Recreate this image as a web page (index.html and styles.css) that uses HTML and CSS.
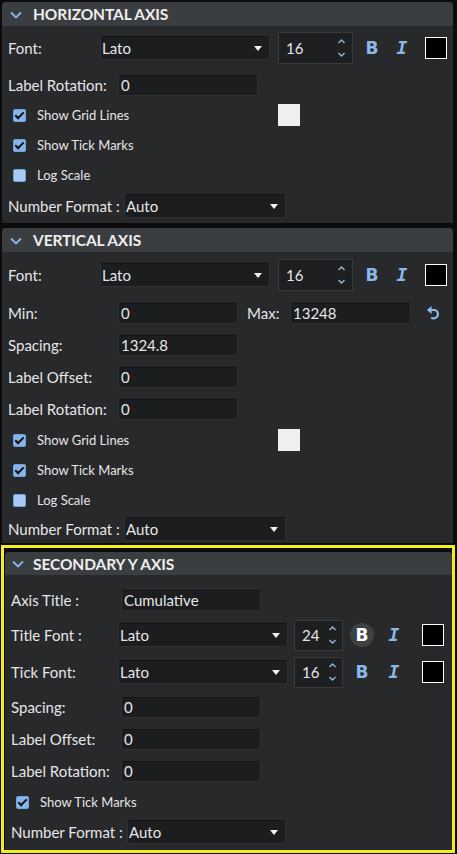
FILE: index.html
```html
<!DOCTYPE html>
<html lang="en">
<head>
    <meta charset="UTF-8">
    <meta name="viewport" content="width=device-width, initial-scale=1.0">
    <title>Axis Settings</title>
    <link rel="stylesheet" href="styles.css">
</head>
<body>
    <!-- Horizontal axis -->
    <div class="panel panel-h">
        <div class="panel-head">
            <svg class="chev" width="12" height="8" viewBox="0 0 12 8"><path d="M1 1.5 L6 6.5 L11 1.5" fill="none" stroke="#8bb8ea" stroke-width="1.8"/></svg>
            <span>HORIZONTAL AXIS</span>
        </div>
        <div class="panel-body">
            <div class="row row-font">
                <span class="lbl w92">Font:</span>
                <div class="select w170"><span>Lato</span><i class="caret"></i></div>
                <div class="spin">
                    <span>16</span>
                    <svg class="spin-arrows" width="9" height="22" viewBox="0 0 9 22"><path d="M1.5 6 L4.5 3 L7.5 6" fill="none" stroke="#9ab6d6" stroke-width="1.4"/><path d="M1.5 16 L4.5 19 L7.5 16" fill="none" stroke="#9ab6d6" stroke-width="1.4"/></svg>
                </div>
                <span class="tool tool-b">B</span>
                <span class="tool tool-i">I</span>
                <span class="swatch"></span>
            </div>
            <div class="row h30">
                <span class="lbl w110">Label Rotation:</span>
                <div class="input w140">0</div>
            </div>
            <div class="row h30">
                <span class="check on"></span>
                <span class="check-text w241">Show Grid Lines</span>
                <span class="swatch-light"></span>
            </div>
            <div class="row h30">
                <span class="check on"></span>
                <span class="check-text">Show Tick Marks</span>
            </div>
            <div class="row h30">
                <span class="check"></span>
                <span class="check-text">Log Scale</span>
            </div>
            <div class="row h32">
                <span class="lbl w116">Number Format :</span>
                <div class="select w162"><span>Auto</span><i class="caret"></i></div>
            </div>
        </div>
    </div>

    <!-- Vertical axis -->
    <div class="panel panel-v">
        <div class="panel-head">
            <svg class="chev" width="12" height="8" viewBox="0 0 12 8"><path d="M1 1.5 L6 6.5 L11 1.5" fill="none" stroke="#8bb8ea" stroke-width="1.8"/></svg>
            <span>VERTICAL AXIS</span>
        </div>
        <div class="panel-body">
            <div class="row row-font">
                <span class="lbl w92">Font:</span>
                <div class="select w170"><span>Lato</span><i class="caret"></i></div>
                <div class="spin">
                    <span>16</span>
                    <svg class="spin-arrows" width="9" height="22" viewBox="0 0 9 22"><path d="M1.5 6 L4.5 3 L7.5 6" fill="none" stroke="#9ab6d6" stroke-width="1.4"/><path d="M1.5 16 L4.5 19 L7.5 16" fill="none" stroke="#9ab6d6" stroke-width="1.4"/></svg>
                </div>
                <span class="tool tool-b">B</span>
                <span class="tool tool-i">I</span>
                <span class="swatch"></span>
            </div>
            <div class="row h32">
                <span class="lbl w110">Min:</span>
                <div class="input w120">0</div>
                <span class="lbl lbl-max">Max:</span>
                <div class="input w121">13248</div>
                <svg class="reset" width="16" height="16" viewBox="0 0 16 16"><path d="M4.5 5 H9 A4.3 4.3 0 1 1 5.2 12.6" fill="none" stroke="#8bb8ea" stroke-width="2.2"/><path d="M0.8 5 L5.6 1 L5.6 9 Z" fill="#8bb8ea"/></svg>
            </div>
            <div class="row h32">
                <span class="lbl w110">Spacing:</span>
                <div class="input w120">1324.8</div>
            </div>
            <div class="row h32">
                <span class="lbl w110">Label Offset:</span>
                <div class="input w120">0</div>
            </div>
            <div class="row h32">
                <span class="lbl w110">Label Rotation:</span>
                <div class="input w120">0</div>
            </div>
            <div class="row h30">
                <span class="check on"></span>
                <span class="check-text w241">Show Grid Lines</span>
                <span class="swatch-light"></span>
            </div>
            <div class="row h30">
                <span class="check on"></span>
                <span class="check-text">Show Tick Marks</span>
            </div>
            <div class="row h30">
                <span class="check"></span>
                <span class="check-text">Log Scale</span>
            </div>
            <div class="row h28">
                <span class="lbl w116">Number Format :</span>
                <div class="select w162"><span>Auto</span><i class="caret"></i></div>
            </div>
        </div>
    </div>

    <!-- Secondary Y axis (selected) -->
    <div class="selected">
        <div class="panel panel-y">
            <div class="panel-head">
                <svg class="chev" width="12" height="8" viewBox="0 0 12 8"><path d="M1 1.5 L6 6.5 L11 1.5" fill="none" stroke="#8bb8ea" stroke-width="1.8"/></svg>
                <span>SECONDARY Y AXIS</span>
            </div>
            <div class="panel-body">
                <div class="row h34">
                    <span class="lbl w110">Axis Title :</span>
                    <div class="input w140">Cumulative</div>
                </div>
                <div class="row h36">
                    <span class="lbl w107">Title Font :</span>
                    <div class="select w170"><span>Lato</span><i class="caret"></i></div>
                    <div class="spin spin-sm">
                        <span>24</span>
                        <svg class="spin-arrows" width="9" height="22" viewBox="0 0 9 22"><path d="M1.5 6 L4.5 3 L7.5 6" fill="none" stroke="#9ab6d6" stroke-width="1.4"/><path d="M1.5 16 L4.5 19 L7.5 16" fill="none" stroke="#9ab6d6" stroke-width="1.4"/></svg>
                    </div>
                    <span class="tool tool-b tool-sm active"><b>B</b></span>
                    <span class="tool tool-i tool-sm">I</span>
                    <span class="swatch swatch-sm"></span>
                </div>
                <div class="row h38">
                    <span class="lbl w107">Tick Font:</span>
                    <div class="select w170"><span>Lato</span><i class="caret"></i></div>
                    <div class="spin spin-sm">
                        <span>16</span>
                        <svg class="spin-arrows" width="9" height="22" viewBox="0 0 9 22"><path d="M1.5 6 L4.5 3 L7.5 6" fill="none" stroke="#9ab6d6" stroke-width="1.4"/><path d="M1.5 16 L4.5 19 L7.5 16" fill="none" stroke="#9ab6d6" stroke-width="1.4"/></svg>
                    </div>
                    <span class="tool tool-b tool-sm">B</span>
                    <span class="tool tool-i tool-sm">I</span>
                    <span class="swatch swatch-sm"></span>
                </div>
                <div class="row h32">
                    <span class="lbl w110">Spacing:</span>
                    <div class="input w140">0</div>
                </div>
                <div class="row h32">
                    <span class="lbl w110">Label Offset:</span>
                    <div class="input w140">0</div>
                </div>
                <div class="row h32">
                    <span class="lbl w110">Label Rotation:</span>
                    <div class="input w140">0</div>
                </div>
                <div class="row h30">
                    <span class="check on"></span>
                    <span class="check-text">Show Tick Marks</span>
                </div>
                <div class="row h30">
                    <span class="lbl w116">Number Format :</span>
                    <div class="select w159"><span>Auto</span><i class="caret"></i></div>
                </div>
            </div>
        </div>
    </div>
</body>
</html>
```

FILE: styles.css
```css
body {
    margin: 0;
    width: 457px;
    height: 854px;
    overflow: hidden;
    background-color: #0c0c0c;
    font-family: Lato, "Open Sans", sans-serif;
    font-size: 15px;
    color: #e6e6e6;
}
.panel {
    background-color: #27292b;
    border-radius: 4px 4px 0 0;
}
.panel-h {
    margin: 2px 4px 0 2px;
    height: 221px;
}
.panel-v {
    margin: 5px 4px 0 2px;
    height: 315px;
}
.panel-head {
    height: 24px;
    display: flex;
    align-items: center;
    background-color: #3a3e40;
    border-radius: 4px 4px 0 0;
    font-weight: bold;
    font-size: 15.5px;
    color: #eeeeee;
    letter-spacing: -0.1px;
}
.chev {
    margin: 1px 11px 0 8px;
}
.panel-body {
    padding: 0 0 0 6px;
}
.panel-v .panel-body {
    padding-top: 1px;
}
.row {
    display: flex;
    align-items: center;
}
.row-font { height: 44px; }
.h28 { height: 28px; }
.h30 { height: 30px; }
.h32 { height: 32px; }
.h34 { height: 34px; }
.h36 { height: 36px; }
.h38 { height: 38px; }

.lbl {
    flex-shrink: 0;
    white-space: nowrap;
}
.w92 { width: 92px; }
.w107 { width: 107px; }
.w110 { width: 110px; }
.w116 { width: 116px; }
.lbl-max {
    width: 43px;
    margin-left: 9px;
}

.input, .select {
    box-sizing: border-box;
    background-color: #1c1d1f;
    border: 1px solid #2e3032;
    border-top-color: #141516;
    border-radius: 3px;
    white-space: nowrap;
}
.input {
    height: 21px;
    line-height: 19px;
    padding-left: 2px;
}
.select {
    height: 24px;
    display: flex;
    align-items: center;
    justify-content: space-between;
    padding: 0 7px 0 1px;
}
.w120 { width: 120px; }
.w121 { width: 121px; }
.w140 { width: 140px; }
.w159 { width: 159px; }
.w162 { width: 162px; }
.w170 { width: 170px; }
.caret {
    width: 0;
    height: 0;
    border-left: 4.5px solid transparent;
    border-right: 4.5px solid transparent;
    border-top: 5px solid #f0f0f0;
}

.spin {
    box-sizing: border-box;
    width: 75px;
    height: 32px;
    margin-left: 8px;
    display: flex;
    align-items: center;
    justify-content: space-between;
    padding: 0 6px 0 7px;
    background-color: #1e1f21;
    border: 1px solid #38393b;
}
.spin-sm {
    width: 49px;
    height: 31px;
    margin-left: 6px;
    padding: 0 5px 0 7px;
}

.tool {
    width: 30px;
    text-align: center;
    color: #8bb8ea;
    line-height: 24px;
}
.tool-b {
    margin-left: 4px;
    font-family: "DejaVu Sans", sans-serif;
    font-weight: bold;
    font-size: 17px;
}
.tool-i {
    font-family: "DejaVu Sans Mono", monospace;
    font-weight: bold;
    font-style: italic;
    font-size: 18px;
}
.tool-sm {
    width: 32px;
}
.tool-b.tool-sm {
    margin-left: 3px;
}
.tool.active b {
    display: inline-block;
    width: 24px;
    height: 24px;
    border-radius: 50%;
    background-color: #3e4042;
    color: #ffffff;
}
.swatch {
    box-sizing: border-box;
    width: 22px;
    height: 22px;
    margin-left: 8px;
    background-color: #000000;
    border: 1px solid #ffffff;
}
.swatch-sm {
    margin-left: 12px;
}
.swatch-light {
    width: 22px;
    height: 22px;
    background-color: #f0f0f0;
}

.check {
    box-sizing: border-box;
    width: 13px;
    height: 13px;
    margin-left: 5px;
    border-radius: 2px;
    border: 1px solid #6fa3e0;
    background-color: #a9c9f2;
    position: relative;
}
.check.on {
    background-color: #86b5ec;
}
.check.on::after {
    content: "";
    position: absolute;
    left: 3px;
    top: 0px;
    width: 3px;
    height: 7px;
    border: solid #111111;
    border-width: 0 2px 2px 0;
    transform: rotate(45deg);
}
.check-text {
    margin-left: 11px;
    font-size: 13px;
}
.w241 { width: 241px; }

.reset {
    margin-left: 15px;
}

.selected {
    box-sizing: border-box;
    margin: 2px 2px 0 1px;
    height: 308px;
    border: 3px solid #f5ee1c;
    padding: 4px 0 0 1px;
}
.panel-y {
    height: 298px;
}
.panel-y .panel-head {
    height: 23px;
}
.panel-y .chev {
    margin: 1px 9px 0 7px;
}
.panel-y .panel-body {
    padding-top: 8px;
}
```
